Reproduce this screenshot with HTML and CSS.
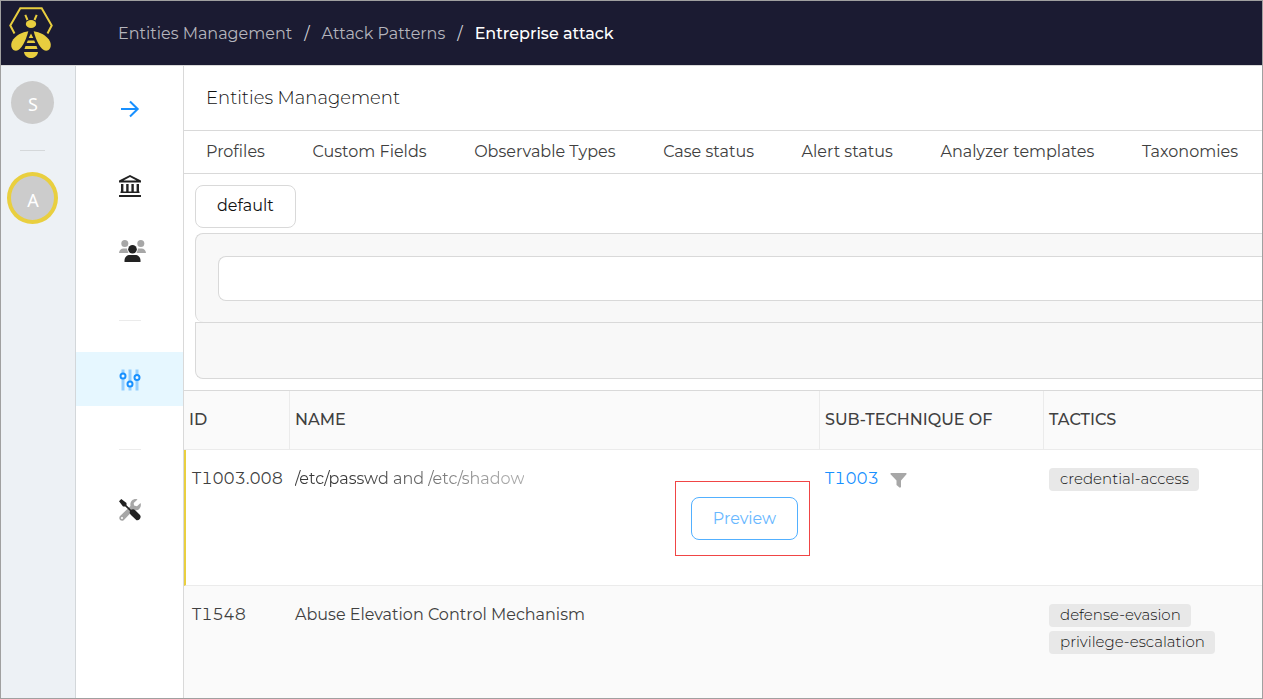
FILE: index.html
```html
<!DOCTYPE html>
<html lang="en">
<head>
<meta charset="utf-8">
<title>Entities Management</title>
<link rel="stylesheet" href="styles.css">
</head>
<body>
<div class="app">
  <header class="topbar">
    <a class="logo" href="#" aria-label="Home">
      <svg width="44" height="52" viewBox="0 0 44 52" fill="#e8ce3f">
        <path d="M5.500 26.500L1.300 18.500L11.300 1.300H32.700L42.700 18.500L38.500 26.500" fill="none" stroke="#e8ce3f" stroke-width="2"/>
        <path d="M16.300 7.800L18.500 13M27.700 7.800L25.500 13" fill="none" stroke="#e8ce3f" stroke-width="2"/>
        <ellipse cx="22" cy="17" rx="5.200" ry="4"/>
        <path d="M19.300 24.300C17 34 12 43.500 7 43.800C3 43.800 1 39 3 34.500C6 28.500 13.500 25 19.300 24.300Z"/>
        <path d="M24.700 24.300C27 34 32 43.500 37 43.800C41 43.800 43 39 41 34.500C38 28.500 30.500 25 24.700 24.300Z"/>
        <path d="M22 26.500L24.300 31H19.700ZM18.800 33.500H25.200L26.300 36H17.700ZM16.500 39H27.500L28.500 42H15.500ZM15 45H29C28.500 49 25 51 22 51S15.500 49 15 45Z"/>
      </svg>
    </a>
    <nav class="crumbs" aria-label="Breadcrumb">
      <a href="#">Entities Management</a><span>/</span><a href="#">Attack Patterns</a><span>/</span><strong>Entreprise attack</strong>
    </nav>
  </header>
  <div class="body">
    <aside class="orgs">
      <button class="avatar" type="button">S</button>
      <hr class="orgs-rule">
      <button class="avatar avatar-on" type="button">A</button>
    </aside>
    <nav class="side" aria-label="Main">
      <a class="side-item side-expand" href="#" aria-label="Expand">
        <svg width="22" height="22" viewBox="0 0 22 22" fill="none" stroke="#1890ff" stroke-width="2"><path d="M2 11H19M11 3.500L18.700 11L11 18.500"/></svg>
      </a>
      <a class="side-item side-bank" href="#" aria-label="Organisations">
        <svg width="22" height="22" viewBox="0 0 22 22" fill="#222"><path fill-rule="evenodd" d="M11 0L22 5.500V7.500H0V5.500ZM11 2L4.500 5.500H17.500Z"/><path d="M2 9h2.400v8H2zM7.200 9h2.400v8H7.200zM12.400 9h2.400v8h-2.400zM17.600 9H20v8h-2.400zM1.500 16.500h19V18h-19zM0 20h22v2H0z"/></svg>
      </a>
      <a class="side-item side-users" href="#" aria-label="Users">
        <svg width="28" height="22" viewBox="0 0 28 22"><g fill="#a7a7a7"><circle cx="5.800" cy="3.500" r="3.500"/><circle cx="21.800" cy="3.500" r="3.500"/><path d="M0 13C.3 10 2 8.500 4.500 8.500H8.200L9.500 13ZM27 13C26.700 10 25 8.500 22.500 8.500H18.800L17.500 13Z"/></g><circle cx="13.500" cy="9.200" r="5.100" fill="#fff"/><circle cx="13.500" cy="9.200" r="4.300" fill="#222"/><path d="M5.500 22V20.500C5.500 17 8 15 11 15H16C19 15 21.500 17 21.500 20.500V22Z" fill="#222"/></svg>
      </a>
      <hr class="side-rule">
      <a class="side-item side-on" href="#" aria-label="Entities Management">
        <svg width="22" height="22" viewBox="0 0 22 22"><path d="M4 .5V21.500M11 .5V21.500M18 .5V21.500" stroke="#95cfff" stroke-width="3"/><g fill="#f2faff" stroke="#1890ff" stroke-width="2"><circle cx="4" cy="7" r="2.500"/><circle cx="11" cy="15" r="2.500"/><circle cx="18" cy="8.500" r="2.500"/></g></svg>
      </a>
      <hr class="side-rule">
      <a class="side-item side-tools" href="#" aria-label="Platform settings">
        <svg width="22" height="22" viewBox="0 0 22 22"><path fill="#a7a7a7" fill-rule="evenodd" d="M18.500.5C15-1 10.500 2 11.500 7L.8 17.200C-1 20 2 23 4.700 21.300L14.500 11C20 12.500 23 8 21.500 4L18 7.300L15 6.500L14.700 4ZM3 18A1 1 0 1 0 3 20.100A1 1 0 1 0 3 18Z"/><path d="M0 2.300L2.300 0L7.500 4V6.300L12 10.800C13.500 10 15 10 16.200 11.200L21 16C23 18.500 20 22 17.500 21.200L11.700 15.700C10.500 14.500 10.500 13.500 11 12L6.300 7.500H4Z" fill="#222"/></svg>
      </a>
    </nav>
    <main class="main">
      <h1 class="title">Entities Management</h1>
      <nav class="tabs" aria-label="Entities">
        <a href="#">Profiles</a><a href="#">Custom Fields</a><a href="#">Observable Types</a><a href="#">Case status</a><a href="#">Alert status</a><a href="#">Analyzer templates</a><a href="#">Taxonomies</a>
      </nav>
      <section class="filters">
        <button class="btn" type="button">default</button>
        <div class="panel panel-search"><input class="search" type="text" aria-label="Filter"></div>
        <div class="panel panel-foot"></div>
      </section>
      <table class="grid">
        <colgroup><col class="col-id"><col class="col-name"><col class="col-sub"><col></colgroup>
        <thead><tr><th>ID</th><th>NAME</th><th>SUB-TECHNIQUE OF</th><th>TACTICS</th></tr></thead>
        <tbody>
          <tr class="row-on">
            <td>T1003.008</td>
            <td><span class="fade">/etc/passwd and /etc/shadow</span><div class="callout"><button class="btn btn-preview" type="button">Preview</button></div></td>
            <td><div class="parent"><a class="link" href="#">T1003</a><svg width="17" height="15" viewBox="0 0 17 15" fill="#a7a7a7"><path d="M1 0H16Q17 .3 16.500 1.300L11 7.500V14Q10 15 9.500 14.500L6.500 12V7.500L.5 1.300Q0 .3 1 0Z"/></svg></div></td>
            <td><ul class="tags"><li>credential-access</li></ul></td>
          </tr>
          <tr class="row-alt">
            <td>T1548</td>
            <td>Abuse Elevation Control Mechanism</td>
            <td></td>
            <td><ul class="tags"><li>defense-evasion</li><li>privilege-escalation</li></ul></td>
          </tr>
        </tbody>
      </table>
    </main>
  </div>
</div>
</body>
</html>
```
FILE: styles.css
```css
* { box-sizing: border-box; }
body {
  margin: 0;
  font: 400 16px/26px Montserrat, Inter, "Open Sans", sans-serif;
  font-variant-numeric: tabular-nums;
  color: #404040;
  background: #fff;
}
a { color: inherit; text-decoration: none; }
button { font: inherit; color: inherit; cursor: pointer; }
svg { display: block; }
hr { border: 0; margin: 0; height: 1px; }

.app {
  display: flex;
  flex-direction: column;
  height: 100vh;
  overflow: hidden;
  border: 1px solid #a0a0a0;
}
.topbar {
  flex: none;
  display: flex;
  align-items: center;
  height: 65px;
  padding-left: 8px;
  background: #1b1b32;
  border-bottom: 1px solid #d9d9d9;
}
.logo { width: 109px; }
.crumbs { display: flex; gap: 12px; padding-top: 2px; color: #b5b5bd; }
.crumbs span { color: #d5d5da; }
.crumbs strong { font-weight: 500; color: #fff; }

.body { flex: 1; display: flex; min-height: 0; }
.orgs {
  flex: none;
  display: flex;
  flex-direction: column;
  align-items: center;
  width: 75px;
  padding: 15px 12px 0 0;
  background: #edf1f5;
  border-right: 1px solid #d3d7da;
}
.avatar {
  width: 43px;
  height: 43px;
  padding: 3px 0 0 2px;
  border: 0;
  border-radius: 50%;
  background: #ccc;
  color: #fff;
  font: 400 18px/24px "Noto Sans", sans-serif;
}
.avatar-on { width: 51px; height: 52px; border: 4px solid #e9cf3f; }
.orgs-rule { width: 25px; margin: 26px 0 21px; background: #d5d8da; }

.side {
  flex: none;
  display: flex;
  flex-direction: column;
  width: 108px;
  border-right: 1px solid #d9d9d9;
}
.side-item {
  display: flex;
  align-items: center;
  justify-content: center;
  height: 64px;
}
.side-expand { height: 86px; margin-bottom: 3px; }
.side-bank { padding-bottom: 2px; }
.side-users { padding-left: 6px; }
.side-rule { width: 22px; margin: 37px auto 31px; background: #ebebeb; }
.side-on { height: 54px; padding-top: 2px; background: #e6f7ff; }
.side-on + .side-rule { margin: 43px auto 28px; }

.main { flex: 1; min-width: 0; display: flex; flex-direction: column; overflow: hidden; }
.title {
  margin: 0;
  padding: 20px 22px;
  font-size: 18px;
  font-weight: 300;
  line-height: 24px;
  color: #111;
  border-bottom: 1px solid #d9d9d9;
}
.tabs {
  display: flex;
  justify-content: space-between;
  padding: 8px 24px 8px 22px;
  white-space: nowrap;
  border-bottom: 1px solid #d9d9d9;
}
.filters { padding: 11px 0 11px 11px; border-bottom: 1px solid #d9d9d9; }
.btn {
  display: block;
  padding: 7px 21px 8px;
  color: #111;
  background: #fff;
  border: 1px solid #d9d9d9;
  border-radius: 8px;
}
.panel { background: #f8f8f8; border: 1px solid #d9d9d9; border-right: 0; }
.panel-search { margin-top: 5px; padding: 22px 0 21px 22px; border-bottom: 0; border-radius: 8px 0 0 8px; }
.panel-foot { height: 57px; border-radius: 0 0 0 8px; }
.search {
  display: block;
  width: 100%;
  height: 45px;
  padding: 0 12px;
  font: inherit;
  background: #fff;
  border: 1px solid #d9d9d9;
  border-right: 0;
  border-radius: 8px 0 0 8px;
}

.grid { width: 100%; table-layout: fixed; border-collapse: separate; border-spacing: 0; }
.col-id { width: 106px; }
.col-name { width: 530px; }
.col-sub { width: 224px; }
.grid th {
  padding: 16px 5px;
  font-weight: 500;
  text-align: left;
  background: #fafafa;
  border-right: 1px solid #ebebeb;
  border-bottom: 1px solid #ebebeb;
}
.grid th:last-child { border-right: 0; }
.grid td { padding: 16px 5px 28px; vertical-align: top; border-bottom: 1px solid #ebebeb; }
.grid td:first-child { padding-left: 8px; padding-right: 0; }
.grid .row-on td:first-child { border-left: 2px solid #e9cf3f; padding-left: 6px; }
.row-alt td { height: 136px; background: #fafafa; }
.fade {
  background: linear-gradient(90deg, #383838 25%, #a8a8a8 90%);
  -webkit-background-clip: text;
  background-clip: text;
  color: transparent;
}
.callout {
  width: 135px;
  margin: -11px 5px 1px auto;
  padding: 15px 11px 15px 15px;
  border: 1px solid #f04545;
}
.btn-preview { width: 100%; padding: 8px 0 7px; color: #69b8ff; border-color: #52b0ff; }
.parent { display: flex; align-items: center; gap: 11px; }
.parent svg { margin-top: 2px; }
.link { color: #1890ff; }
.tags { display: flex; flex-direction: column; align-items: flex-start; gap: 4px; margin: 2px 0 0; padding: 0; list-style: none; }
.tags li { padding: 0 10px 1px 11px; font-size: 15px; font-weight: 300; line-height: 22px; color: #111; border-radius: 4px; background: #e8e8e8; }
```
